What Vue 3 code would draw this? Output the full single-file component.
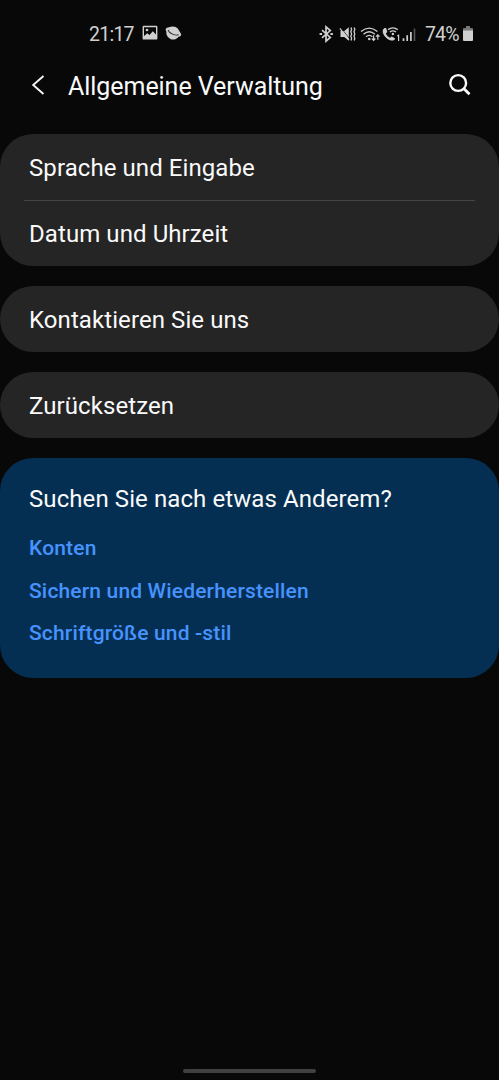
<script setup>
const groups = [
  ['Sprache und Eingabe', 'Datum und Uhrzeit'],
  ['Kontaktieren Sie uns'],
  ['Zurücksetzen'],
]
const links = ['Konten', 'Sichern und Wiederherstellen', 'Schriftgröße und -stil']
</script>

<template>
  <div class="screen">
    <div class="status">
      <span class="clock">21:17</span>
      <svg class="picture" width="16" height="16" viewBox="0 0 16 16">
        <path fill="#d0d0d0" fill-rule="evenodd" d="M1.800.8h12.400a1.200 1.200 0 0 1 1.200 1.200v11.400a1.200 1.200 0 0 1-1.200 1.200H1.800a1.200 1.200 0 0 1-1.200-1.200V2A1.200 1.200 0 0 1 1.800.8ZM2 11 5.300 8.200l2.200 1.800 3.300-3.800 3.200 3.200V2.200H2Z" />
        <circle cx="5" cy="5" r="1.300" fill="#d0d0d0" />
      </svg>
      <svg class="planet" width="18" height="16" viewBox="0 0 18 16">
        <g transform="rotate(24 9 8)">
          <circle cx="9" cy="8" r="6.600" fill="#d0d0d0" />
          <ellipse cx="9" cy="7" rx="8.300" ry="3.800" fill="#d0d0d0" />
          <path d="M3.200 7.300C5.500 9.800 12.500 9.800 14.800 7.300" fill="none" stroke="#222" stroke-width=".9" />
        </g>
      </svg>
      <span class="spacer"></span>
      <svg class="signals" width="98" height="20" viewBox="0 0 98 20" fill="none" stroke="#d0d0d0">
        <!-- bluetooth -->
        <path d="m3 6.200 8.300 7.200L7 17.200V2.800l4.300 3.800L3 13.800" stroke-width="1.700" />
        <path d="M.6 10h2.500M11.400 10h2.500" stroke-width="2.200" />
        <!-- muted, vibrating -->
        <path d="M21.500 7h3.800l4.500-3.800v13.600l-4.500-3.800h-3.800Z" fill="#d0d0d0" stroke="none" />
        <path d="m21.800 3.600 9 11.400" stroke="#080808" stroke-width=".7" />
        <path d="m20.900 4.300 9 11.500" stroke-width="1.200" />
        <path d="m32 3.500.6 2-.8 2.200.8 2.200-.8 2.200.8 2.200-.6 2.200M35.200 3.500l.6 2-.8 2.200.8 2.200-.8 2.200.8 2.200-.6 2.200" stroke-width="1.300" />
        <!-- wifi with transfer arrows -->
        <path d="M42 7.600Q50.200.6 58.400 7.600M44.500 10.200Q50.200 5.300 55.900 10.200M47 12.800Q50.200 10 53.400 12.800" stroke-width="1.300" />
        <circle cx="50.300" cy="15" r="1.300" fill="#d0d0d0" stroke="none" />
        <path d="M54.600 11.300v5m-1.800-1.800 1.800 1.800 1.700-1.800M58.800 15.800v-5m-1.800 1.800 1.800-1.800 1.700 1.800" stroke-width="1.200" />
        <!-- wifi call -->
        <path d="M65.700 4c-2.200 1-2.600 3.700-1.100 6.500 2 3.700 6.300 6.800 9.600 5.900 1.300-.4 2-1.300 1.900-1.800l-3.300-2.100-1.800 1.300c-1.800-.8-3.500-2.500-4.200-4.300l1.500-1.600L67.100 4Z" fill="#d0d0d0" stroke="none" />
        <path d="M69 5.600q4.900-3.400 9.700 0M70.800 8q3.100-2.200 6.200 0" stroke-width="1.300" />
        <circle cx="73.900" cy="10" r="1.200" fill="#d0d0d0" stroke="none" />
        <path d="m78.300 12 1.300-.8v5.800" stroke-width="1.200" />
        <!-- signal strength -->
        <path d="M84.500 17v-2.800M88.200 17v-5.700M91.900 17V8" stroke-width="1.700" />
        <path d="M95.500 17V4.500" stroke="#555" stroke-width="1.600" />
      </svg>
      <span class="percent">74%</span>
      <svg class="battery" width="10" height="16" viewBox="0 0 10 16">
        <path fill="#777" d="M3 0h4v2h2a1 1 0 0 1 1 1v3H0V3a1 1 0 0 1 1-1h2Z" />
        <path fill="#d0d0d0" d="M0 4.500h10V14a1 1 0 0 1-1 1H1a1 1 0 0 1-1-1Z" />
      </svg>
    </div>

    <header class="bar">
      <svg class="back" width="14" height="20" viewBox="0 0 14 20">
        <path d="M12.500 1 2.200 10l10.300 9" fill="none" stroke="#f5f5f5" stroke-width="1.900" />
      </svg>
      <h1>Allgemeine Verwaltung</h1>
      <svg class="search" width="24" height="24" viewBox="0 0 24 24">
        <circle cx="10.200" cy="10" r="7.900" fill="none" stroke="#fafafa" stroke-width="2.400" />
        <path d="m15.700 15.500 5.800 5.700" stroke="#fafafa" stroke-width="2.900" />
      </svg>
    </header>

    <main>
      <section v-for="(group, i) in groups" :key="i" class="card">
        <div v-for="item in group" :key="item" class="row">{{ item }}</div>
      </section>
      <section class="hint">
        <h2>Suchen Sie nach etwas Anderem?</h2>
        <a v-for="link in links" :key="link">{{ link }}</a>
      </section>
    </main>
    <div class="handle"></div>
  </div>
</template>

<style>
body { background: #080808; }
</style>

<style scoped>
.screen {
  display: flex;
  flex-direction: column;
  width: 499px;
  height: 1080px;
  overflow: hidden;
  background: #080808;
  color: #fafafa;
  font-family: Roboto, sans-serif;
}
.status {
  display: flex;
  align-items: center;
  height: 52px;
  padding: 15px 27px 0 89px;
  box-sizing: border-box;
  color: #d0d0d0;
  font-size: 19.500px;
}
.clock { width: 45px; letter-spacing: -0.75px; }
.picture { margin-left: 8px; margin-top: -1px; }
.planet { margin-left: 6px; margin-top: -2px; }
.clock, .percent { padding-top: 2px; line-height: 24px; white-space: nowrap; }
.spacer { flex: 1; }
.signals { margin-right: 8px; }
.percent { width: 33px; margin-right: 5px; letter-spacing: -0.85px; }
.battery { margin-right: -1px; }
.bar {
  display: flex;
  align-items: center;
  height: 66px;
  padding: 0 27px 0 31px;
}
.back { margin-right: 23px; }
h1 {
  flex: 1;
  margin: 4px 0 0;
  font-size: 25px;
  font-weight: 400;
  line-height: 30px;
  letter-spacing: -0.05px;
}
main {
  display: flex;
  flex: 1;
  flex-direction: column;
  gap: 20px;
  padding-top: 15.500px;
}
.card {
  border-radius: 33px;
  background: #252525;
}
.row {
  position: relative;
  height: 66.200px;
  padding: 1px 29px 0;
  box-sizing: border-box;
  font-size: 24px;
  line-height: 67px;
  letter-spacing: 0.08px;
}
.row + .row::before {
  content: '';
  position: absolute;
  top: 0;
  left: 24px;
  right: 24px;
  height: 1.500px;
  background: #444;
}
.hint {
  display: flex;
  flex-direction: column;
  height: 220px;
  padding: 21px 29px;
  box-sizing: border-box;
  border-radius: 33px;
  background: #052f52;
}
h2 {
  margin: 0 0 8px;
  font-size: 24px;
  font-weight: 400;
  line-height: 40px;
  letter-spacing: 0.09px;
}
.hint a {
  color: #4693ff;
  font-size: 21px;
  font-weight: 500;
  line-height: 42.500px;
  letter-spacing: 0.16px;
}
.handle {
  align-self: center;
  width: 133px;
  height: 4px;
  margin-bottom: 7px;
  border-radius: 2px;
  background: #404040;
}
</style>
